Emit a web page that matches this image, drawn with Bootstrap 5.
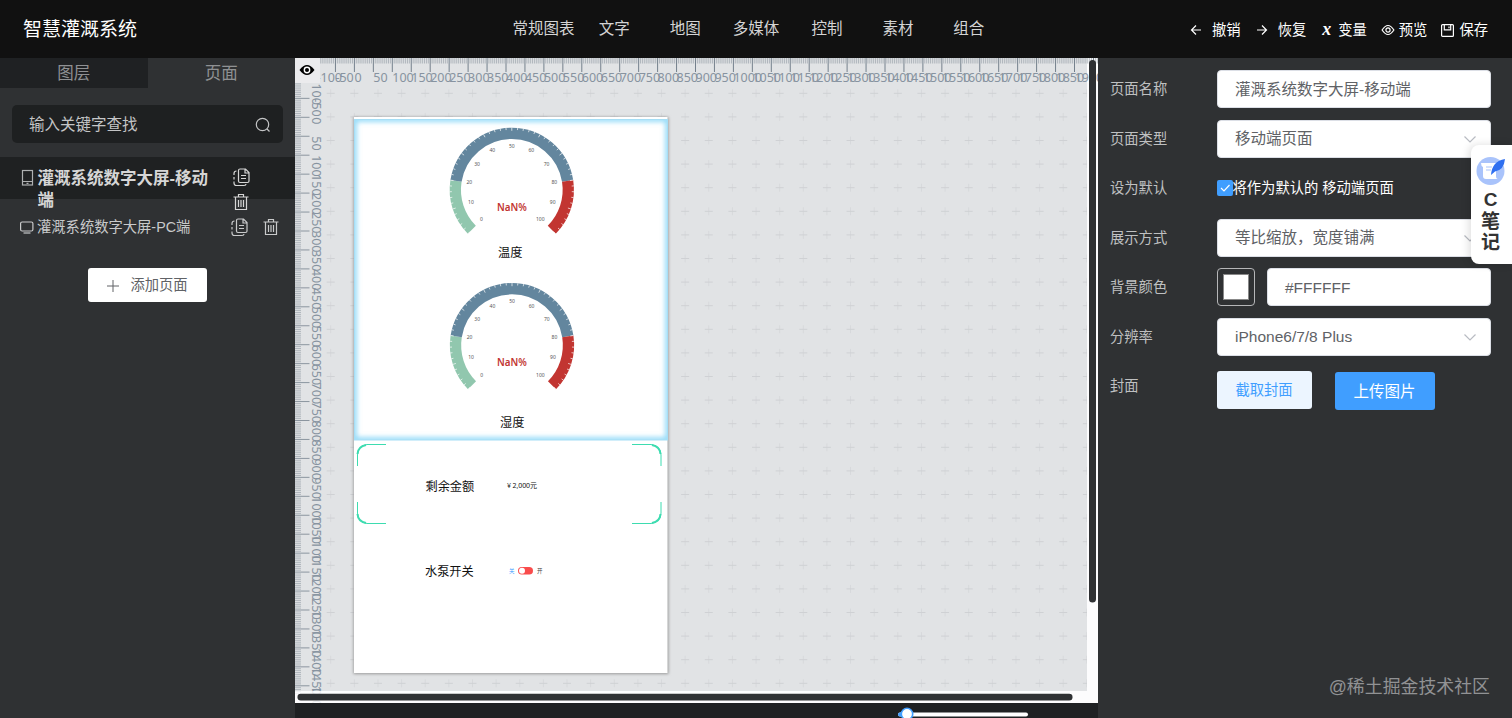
<!DOCTYPE html>
<html lang="zh-CN">
<head>
<meta charset="utf-8">
<title>智慧灌溉系统</title>
<link href="https://cdn.jsdelivr.net/npm/bootstrap@5.3.0/dist/css/bootstrap.min.css" rel="stylesheet">
<style>
body{font-family:"Liberation Sans","Noto Sans CJK SC",sans-serif;background:#2f3133;height:718px;font-size:14.3px;line-height:22px;color:#c9cacb}
svg{display:block;flex:none}
.ic{fill:none;stroke:currentColor;stroke-width:1.2}
.top-bar{height:58px;background:#111}
.brand-name{width:508px;padding-left:23px;padding-top:2px;font-size:19px;color:#fff}
.menu-item{width:70.9px;font-size:15.5px;color:#d4d4d4;text-align:center;white-space:nowrap}
.tools{margin-left:auto;padding-right:24px;padding-top:2px;color:#fff;white-space:nowrap}
.side{width:295px}
.side-tab{height:30px;font-size:16.5px;line-height:31px;color:#8f9193;background:#2f3133}
.side-tab.off{background:#1f2123}
.search-box{margin:17px 12px 14px;height:38px;background:#1e2021;border-radius:5px;padding:1px 12px 0 17px;font-size:15.5px;color:#c4c5c6}
.page-row{padding-left:21px}
.page-row.sel{height:42px;background:#1f2122;padding-top:10px;font-size:16.5px;font-weight:700;color:#d6d6d6}
.add-btn,.add-btn:hover{width:119px;height:34px;margin:30px auto 0 88px;font-size:14.3px;color:#606266;background:#fff;border-radius:3px;padding:1px 0 0}
.stage{width:803px}
.board{height:645px;background:#fff}
.board>svg{height:645px}
.zoom-bar{height:15px;background:#1f2123;padding-left:602.5px}
.props{width:414px;padding:12px 21.500px 0 12px}
.prop{height:49.55px;display:flex}
.prop>span{width:106.500px;line-height:38px;color:#bfc0c1}
.field{flex:1;height:38px;background:#fff;border:1px solid #dcdfe6;border-radius:4px;font-size:15.5px;color:#606266;padding:1px 13px 0 17.500px}
.field svg{margin-left:auto}
.swatch{width:38px;height:38px;border:1px solid #b5b6b8;border-radius:4px;padding:5px;margin-right:12px}
.swatch div{width:26px;height:26px;background:#fff;border:1px solid #888}
.check{width:16px;height:16px;background:#409eff;border-radius:2px}
.act{height:38px;border-radius:3px;padding:1px 0 0;border:0}
.act.a1{width:95px;background:#ecf5ff;color:#409eff;font-size:14.3px}
.act.a2{width:100px;background:#409eff;color:#fff;font-size:15.5px;margin:1px 0 0 23px}
.note{position:absolute;right:0;top:145px;width:41px;height:119px;background:#fff;border-radius:8px 0 0 8px;box-shadow:-2px 0 8px #0002;color:#333;font-weight:700;font-size:19px;line-height:21.5px;padding-top:11px;padding-right:2px;text-align:center}
.credit{position:absolute;right:22px;top:675px;font-size:17.9px;line-height:24px;color:#919294}
</style>
</head>
<body class="overflow-hidden position-relative">
<header class="top-bar d-flex align-items-center">
  <div class="brand-name">智慧灌溉系统</div>
  <nav class="d-flex">
    <div class="menu-item">常规图表</div><div class="menu-item">文字</div><div class="menu-item">地图</div><div class="menu-item">多媒体</div><div class="menu-item">控制</div><div class="menu-item">素材</div><div class="menu-item">组合</div>
  </nav>
  <div class="tools d-flex align-items-center">
    <svg class="ic" width="12" height="12" viewBox="0 0 12 12" style="margin-right:10px"><path d="M11 6H1.5M6 1.5L1.5 6 6 10.5"/></svg><span>撤销</span>
    <svg class="ic" width="12" height="12" viewBox="0 0 12 12" style="margin:0 10px 0 15px"><path d="M1 6h9.5M6 1.5L10.5 6 6 10.5"/></svg><span>恢复</span>
    <span style="margin:0 7px 2px 16px;font:italic bold 18px 'Liberation Serif',serif">x</span><span>变量</span>
    <svg class="ic" width="14" height="12" viewBox="0 0 13 12" style="margin:0 4px 0 14px"><path d="M.6 6Q6.5-3 12.4 6 6.5 15 .6 6z"/><circle cx="6.5" cy="6" r="2.1"/></svg><span>预览</span>
    <svg class="ic" width="13" height="13" viewBox="0 0 13 13" style="margin:0 5px 0 14px"><rect x=".6" y=".6" width="11.8" height="11.8" rx="1"/><path d="M3.3 1v4.8h6.4V1M8 2.5v1.7"/></svg><span>保存</span>
  </div>
</header>
<main class="d-flex">
  <aside class="side">
    <div class="d-flex text-center"><div class="side-tab off w-50">图层</div><div class="side-tab w-50">页面</div></div>
    <div class="search-box d-flex align-items-center justify-content-between"><span>输入关键字查找</span>
      <svg class="ic" width="16" height="16" viewBox="0 0 16 16"><circle cx="7.5" cy="7.5" r="6.2"/><path d="M12 12l2.500 2.500"/></svg></div>
    <div class="page-row sel d-flex">
      <svg class="ic" width="13" height="18" viewBox="0 0 13 18" style="margin:2px 3.500px 0 0" color="#aeb0b1"><rect x="1.500" y="1.500" width="10" height="14.500"/><path d="M1.500 12.500h10M5.500 14.300h2"/></svg>
      <div style="width:173px">灌溉系统数字大屏-移动端</div>
      <div style="margin-left:21px;margin-top:1px">
        <svg class="ic" width="19" height="19" viewBox="0 0 19 19"><path d="M8 1h5.500L17 4.500V13q0 1.500-1.500 1.500H8Q6.500 14.500 6.500 13V2.500Q6.500 1 8 1M9 7.500h5M9 10.500h5M13 1v4H17M4.500 3Q2 3 2 5.500V7M2 9v2.500M2 13.500V15q0 2.500 2.500 2.500H12q2 0 2-1.500"/></svg>
        <svg class="ic" width="19" height="18" viewBox="0 0 19 18" style="margin-top:6px;margin-left:.5px"><path d="M1.500 4h15M6.500 4V1.500h5V4M3.500 4v12.500h11V4M6.500 7v7M9 7v7M11.500 7v7"/></svg>
      </div>
    </div>
    <div class="page-row d-flex" style="padding-top:17px;padding-left:20px">
      <svg class="ic" width="14" height="13" viewBox="0 0 14 13" style="margin:5px 3px 0 0"><rect x=".6" y="1" width="12.300" height="9" rx="1.500"/><path d="M3.500 12h7"/></svg>
      <div style="width:193px">灌溉系统数字大屏-PC端</div>
      <svg class="ic" width="19" height="19" viewBox="0 0 19 19" style="margin:2px 12.500px 0 0"><path d="M8 1h5.500L17 4.500V13q0 1.500-1.500 1.500H8Q6.500 14.500 6.500 13V2.500Q6.500 1 8 1M9 7.500h5M9 10.500h5M13 1v4H17M4.500 3Q2 3 2 5.500V7M2 9v2.500M2 13.500V15q0 2.500 2.500 2.500H12q2 0 2-1.500"/></svg>
      <svg class="ic" width="19" height="18" viewBox="0 0 19 18" style="margin-top:2px"><path d="M1.500 4h15M6.500 4V1.500h5V4M3.500 4v12.500h11V4M6.500 7v7M9 7v7M11.500 7v7"/></svg>
    </div>
    <button class="btn add-btn d-flex align-items-center justify-content-center"><svg class="ic" width="12" height="12" viewBox="0 0 12 12" style="margin-right:11px"><path d="M6 0v12M0 6h12" stroke-width="1"/></svg>添加页面</button>
  </aside>
  <section class="stage">
    <div class="board">
      <svg id="board" width="803" height="645" viewBox="295 58 803 645" font-family="'Noto Sans','Noto Sans CJK SC',sans-serif">
        <defs><filter id="glow" x="-10%" y="-10%" width="120%" height="120%"><feGaussianBlur stdDeviation="2.500"/></filter>
        <filter id="shade" x="-5%" y="-5%" width="110%" height="110%"><feGaussianBlur stdDeviation="1.500"/></filter>
        <clipPath id="panel"><rect x="354" y="119" width="314" height="321"/></clipPath></defs>
        <rect x="295" y="58" width="792" height="633" fill="#e1e3e5"/>
        <g id="crosses" stroke="#cfd1d4" stroke-width="1"></g>
        <rect x="353.500" y="117" width="315" height="557" fill="#999" filter="url(#shade)"/>
        <rect x="354" y="117" width="313.500" height="556" fill="#fff"/>
        <g clip-path="url(#panel)"><rect x="354" y="119" width="314" height="321" fill="none" stroke="#8fd9f8" stroke-width="5.500" filter="url(#glow)"/></g>
        <rect x="354.500" y="119.500" width="313" height="320.500" fill="none" stroke="#a6def5"/>
        <g id="gauges"></g>
        <g fill="#111" font-size="12.200"><text x="498" y="257">温度</text><text x="500" y="427">湿度</text><text x="425.500" y="490.500">剩余金额</text><text x="425" y="575.500">水泵开关</text></g>
        <text x="507" y="487.500" font-size="7" fill="#111" textLength="30">¥ 2,000元</text>
        <text x="509" y="572.500" font-size="5.500" fill="#409eff">关</text><text x="537" y="572.500" font-size="5.500" fill="#444">开</text>
        <rect x="518" y="567" width="15" height="7.500" rx="3.750" fill="#f94c4c"/><circle cx="522" cy="570.700" r="3" fill="#fff"/>
        <g fill="none" stroke="#3ddcb0" stroke-width="1"><path d="M386 444.500H367Q357.500 446 357.500 455V466M632 444.500H651Q661 446 661 455V466M386 523.500H367Q357.500 522 357.500 513V502M632 523.500H651Q661 522 661 513V502"/><path stroke-width="2" d="M357.500 454Q358 446.500 366 445M660.500 454Q660 446.500 652 445M357.500 514Q358 521.500 366 523M660.500 514Q660 521.500 652 523"/></g>
        <g id="rulers" font-size="12.500" fill="#8793a0"></g>
        <rect x="295" y="58" width="25" height="25" fill="#ebebed"/>
        <path d="M299.500 70Q307 60 314.500 70 307 80 299.500 70z" fill="#000"/><circle cx="307" cy="70" r="3.400" fill="#fff"/><circle cx="307" cy="70" r="2" fill="#000"/>
        <rect x="1087" y="83" width="11" height="620" fill="#fcfcfd"/>
        <rect x="1089" y="60" width="7" height="542.500" rx="3.500" fill="#2f3133"/>
        <rect x="295" y="691" width="803" height="12" fill="#fcfcfd" fill-opacity=".85"/>
        <rect x="297.500" y="693.800" width="775" height="6.700" rx="3.300" fill="#2f3133"/>
      </svg>
    </div>
    <div class="zoom-bar"><svg width="140" height="15" viewBox="898 703 140 15"><rect x="898" y="712.500" width="130" height="4" rx="2" fill="#fff"/><rect x="898" y="712.500" width="9" height="4" rx="2" fill="#409eff"/><circle cx="907" cy="714" r="5.700" fill="#fff" stroke="#409eff" stroke-width="1.600"/></svg></div>
  </section>
  <aside class="props">
    <div class="prop"><span>页面名称</span><div class="field d-flex align-items-center">灌溉系统数字大屏-移动端</div></div>
    <div class="prop"><span>页面类型</span><div class="field d-flex align-items-center">移动端页面<svg class="ic" width="14" height="14" viewBox="0 0 14 14" color="#b8bbc2"><path d="M1.500 4.500L7 10l5.500-5.500"/></svg></div></div>
    <div class="prop"><span>设为默认</span><div class="d-flex align-items-center text-white" style="height:38px"><div class="check"><svg class="ic" width="16" height="16" viewBox="0 0 16 16"><path d="M4 8l3 3 5.500-6"/></svg></div>将作为默认的 移动端页面</div></div>
    <div class="prop"><span>展示方式</span><div class="field d-flex align-items-center">等比缩放，宽度铺满<svg class="ic" width="14" height="14" viewBox="0 0 14 14" color="#b8bbc2"><path d="M1.500 4.500L7 10l5.500-5.500"/></svg></div></div>
    <div class="prop"><span>背景颜色</span><div class="swatch"><div></div></div><div class="field d-flex align-items-center">#FFFFFF</div></div>
    <div class="prop"><span>分辨率</span><div class="field d-flex align-items-center">iPhone6/7/8 Plus<svg class="ic" width="14" height="14" viewBox="0 0 14 14" color="#b8bbc2"><path d="M1.500 4.500L7 10l5.500-5.500"/></svg></div></div>
    <div class="prop" style="padding-top:4px"><span style="line-height:31px">封面</span><button class="btn act a1">截取封面</button><button class="btn act a2">上传图片</button></div>
  </aside>
</main>
<div class="note">
  <svg width="30" height="29" viewBox="0 0 30 29" style="margin-left:5px;margin-bottom:4px"><circle cx="14.500" cy="15" r="14" fill="#a9c3fb"/><path d="M5 7h15v13q0 3 2 3H10q-3 0-3-3V11q-2-1-2-4z" fill="#fff"/><path d="M10 11h6M10 14h5" stroke="#a9c3fb"/><path d="M15 19Q16 5 29 3q-1 11-10 12.500z" fill="#2f6ff0"/></svg>
  C<br>笔<br>记
</div>
<div class="credit">@稀土掘金技术社区</div>
<script>
// Grid crosses, rulers and gauges are drawn from their scale values.
const put = (id, html) => document.getElementById(id).innerHTML = html;
let s = '';
for (let x = 330.7; x < 1087; x += 23.63) for (let y = 93.3; y < 690; y += 23.6)
  s += `<path d="M${x-4} ${y}h8"/><path d="M${x} ${y-4}v8" opacity=".55"/>`;
put('crosses', s);

s = '';
const step = 18.95, x0 = 354.4, y0 = 117.3;
for (let i = -20; i < 400; i++) {
  const x = x0 + i * step / 10, y = y0 + i * step / 10, big = i % 10 === 0;
  if (x < 1098) s += `<path d="M${x} 58v${big ? 14 : 5.5}" stroke="${big ? '#74808c' : '#a3abb3'}" stroke-width="${big ? 1 : .8}"/>`;
  if (y < 694) s += `<path d="M295 ${y}h${big ? 14.5 : 6}" stroke="${big ? '#8b959f' : '#a3abb3'}" stroke-width="${big ? 1 : .8}"/>`;
  if (big && x < 1090) s += `<text x="${x}" y="81.500">${i * 5}</text>`;
  if (big && y < 700) s += `<text transform="translate(312 ${y}) rotate(90)">${i * 5}</text>`;
}
put('rulers', s);

const pt = (cx, cy, r, v) => { const a = (v * 2.7 - 135) * Math.PI / 180; return [cx + r * Math.sin(a), cy - r * Math.cos(a)]; };
s = '';
for (const [cx, cy] of [[511.8, 189.8], [512, 345.2]]) {
  for (const [a, b, c] of [[0, 20, '#91c7ae'], [20, 80, '#63869e'], [80, 100, '#c23531']])
    s += `<path d="M${pt(cx, cy, 56.5, a)}A56.5 56.5 0 0 1 ${pt(cx, cy, 56.5, b)}" fill="none" stroke="${c}" stroke-width="11.300"/>`;
  for (let v = 0; v <= 100; v += 2)
    s += `<path d="M${pt(cx, cy, 62.2, v)}L${pt(cx, cy, v % 10 ? 60 : 59, v)}" stroke="#fff" stroke-width=".7"/>`;
  for (let v = 0; v <= 100; v += 10) {
    const [x, y] = pt(cx, cy, 43, v);
    s += `<text x="${x - (v > 90 ? 2 : 0)}" y="${y + 1}" font-size="5" fill="#555" text-anchor="middle">${v}</text>`;
  }
  s += `<text x="${cx}" y="${cy + 21.2}" font-size="9.800" font-weight="600" fill="#c23531" text-anchor="middle">NaN%</text>`;
}
put('gauges', s);
</script>
<script src="https://cdn.jsdelivr.net/npm/bootstrap@5.3.0/dist/js/bootstrap.bundle.min.js"></script>
</body>
</html>
